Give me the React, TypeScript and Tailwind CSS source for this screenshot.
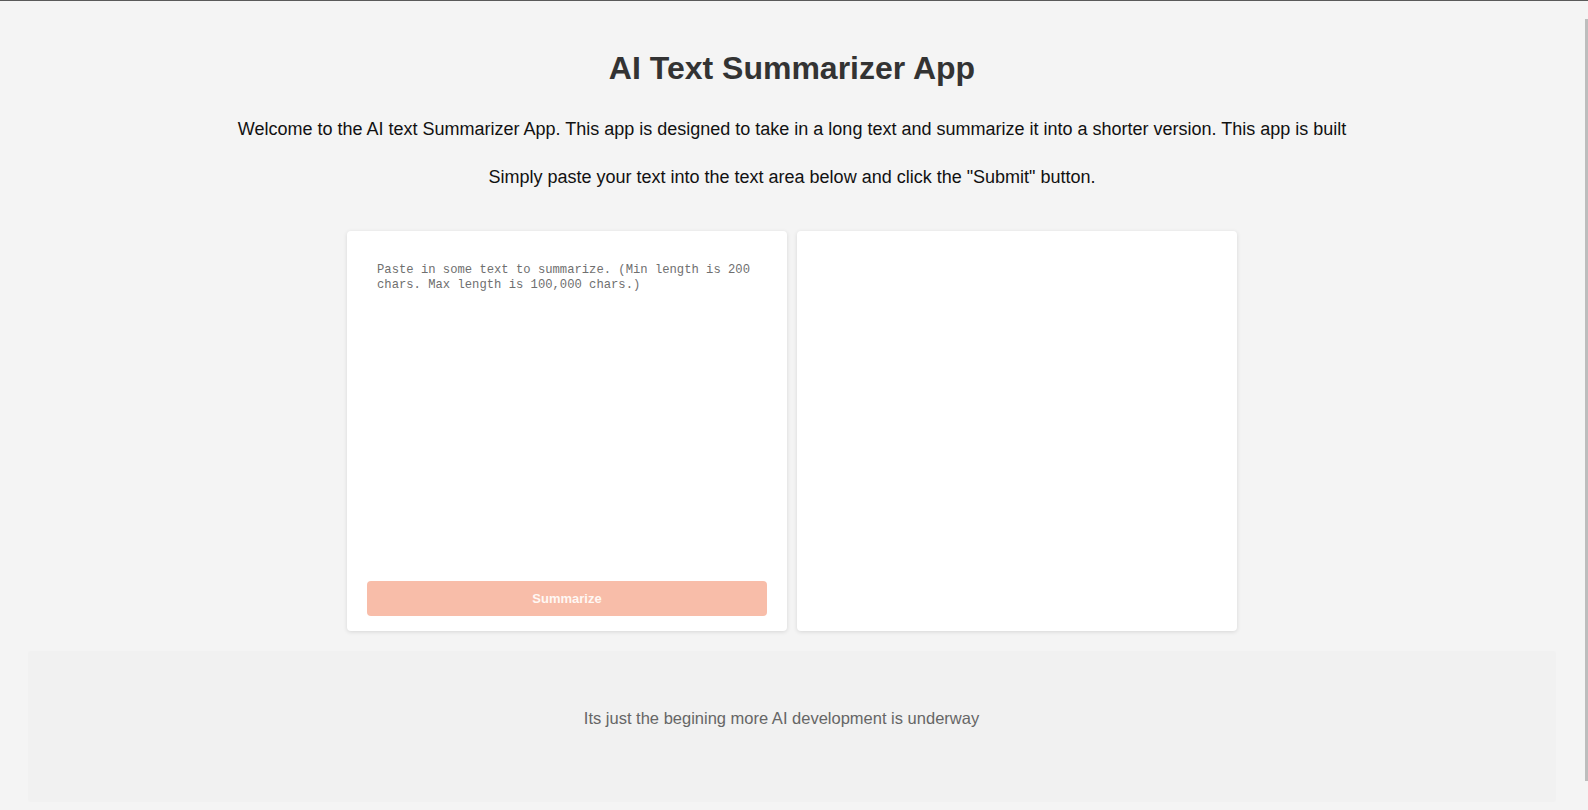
import { useState } from "react";

const sans = { fontFamily: '"Liberation Sans", Arial, sans-serif' };

export default function App() {
  const [text, setText] = useState("");

  return (
    <div className="relative h-[810px] overflow-hidden bg-[#f4f4f4] border-t border-[#5a5a5a]" style={sans}>
      {/* fake scrollbar thumb */}
      <div className="absolute right-0 top-[18px] h-[762px] w-[3px] bg-[#bdbdbd]" />

      <div className="w-[1584px] pt-[49px]">
        <h1 className="text-center text-[32px] leading-[37px] font-bold text-[#333]">
          AI Text Summarizer App
        </h1>
        <p className="mt-[28px] text-center text-[18px] leading-[29px] text-[#111] whitespace-nowrap">
          Welcome to the AI text Summarizer App. This app is designed to take in a long text and summarize it into a shorter version. This app is built
        </p>
        <p className="mt-[19px] text-center text-[18px] leading-[29px] text-[#111]">
          Simply paste your text into the text area below and click the "Submit" button.
        </p>

        {/* Panels */}
        <div className="mt-[39px] flex justify-center gap-[10px]">
          <div className="flex h-[400px] w-[440px] flex-col rounded-[4px] bg-white p-[20px] pb-[15px] shadow-[0_1px_4px_rgba(0,0,0,0.12)]">
            <textarea
              value={text}
              onChange={(e) => setText(e.target.value)}
              placeholder="Paste in some text to summarize. (Min length is 200 chars. Max length is 100,000 chars.)"
              className="flex-1 resize-none border-none p-[10px] pt-[12px] text-[12.2px] leading-[15px] text-[#333] outline-none placeholder:text-[#6f6f6f]"
              style={{ fontFamily: '"Liberation Mono", "DejaVu Sans Mono", monospace' }}
            />
            <button
              type="button"
              className="mt-[10px] h-[35px] w-full rounded-[4px] bg-[#f8bda9] text-[13px] font-bold text-[#fff8f4]"
            >
              Summarize
            </button>
          </div>
          <div className="h-[400px] w-[440px] rounded-[4px] bg-white shadow-[0_1px_4px_rgba(0,0,0,0.12)]" />
        </div>

        {/* Footer */}
        <footer className="mx-[28px] mt-[20px] h-[151px] rounded-[2px] bg-[#f1f1f1] pt-[57px] pr-[21px] text-center text-[16.5px] leading-[20px] text-[#666]">
          Its just the begining more AI development is underway
        </footer>
      </div>
    </div>
  );
}
